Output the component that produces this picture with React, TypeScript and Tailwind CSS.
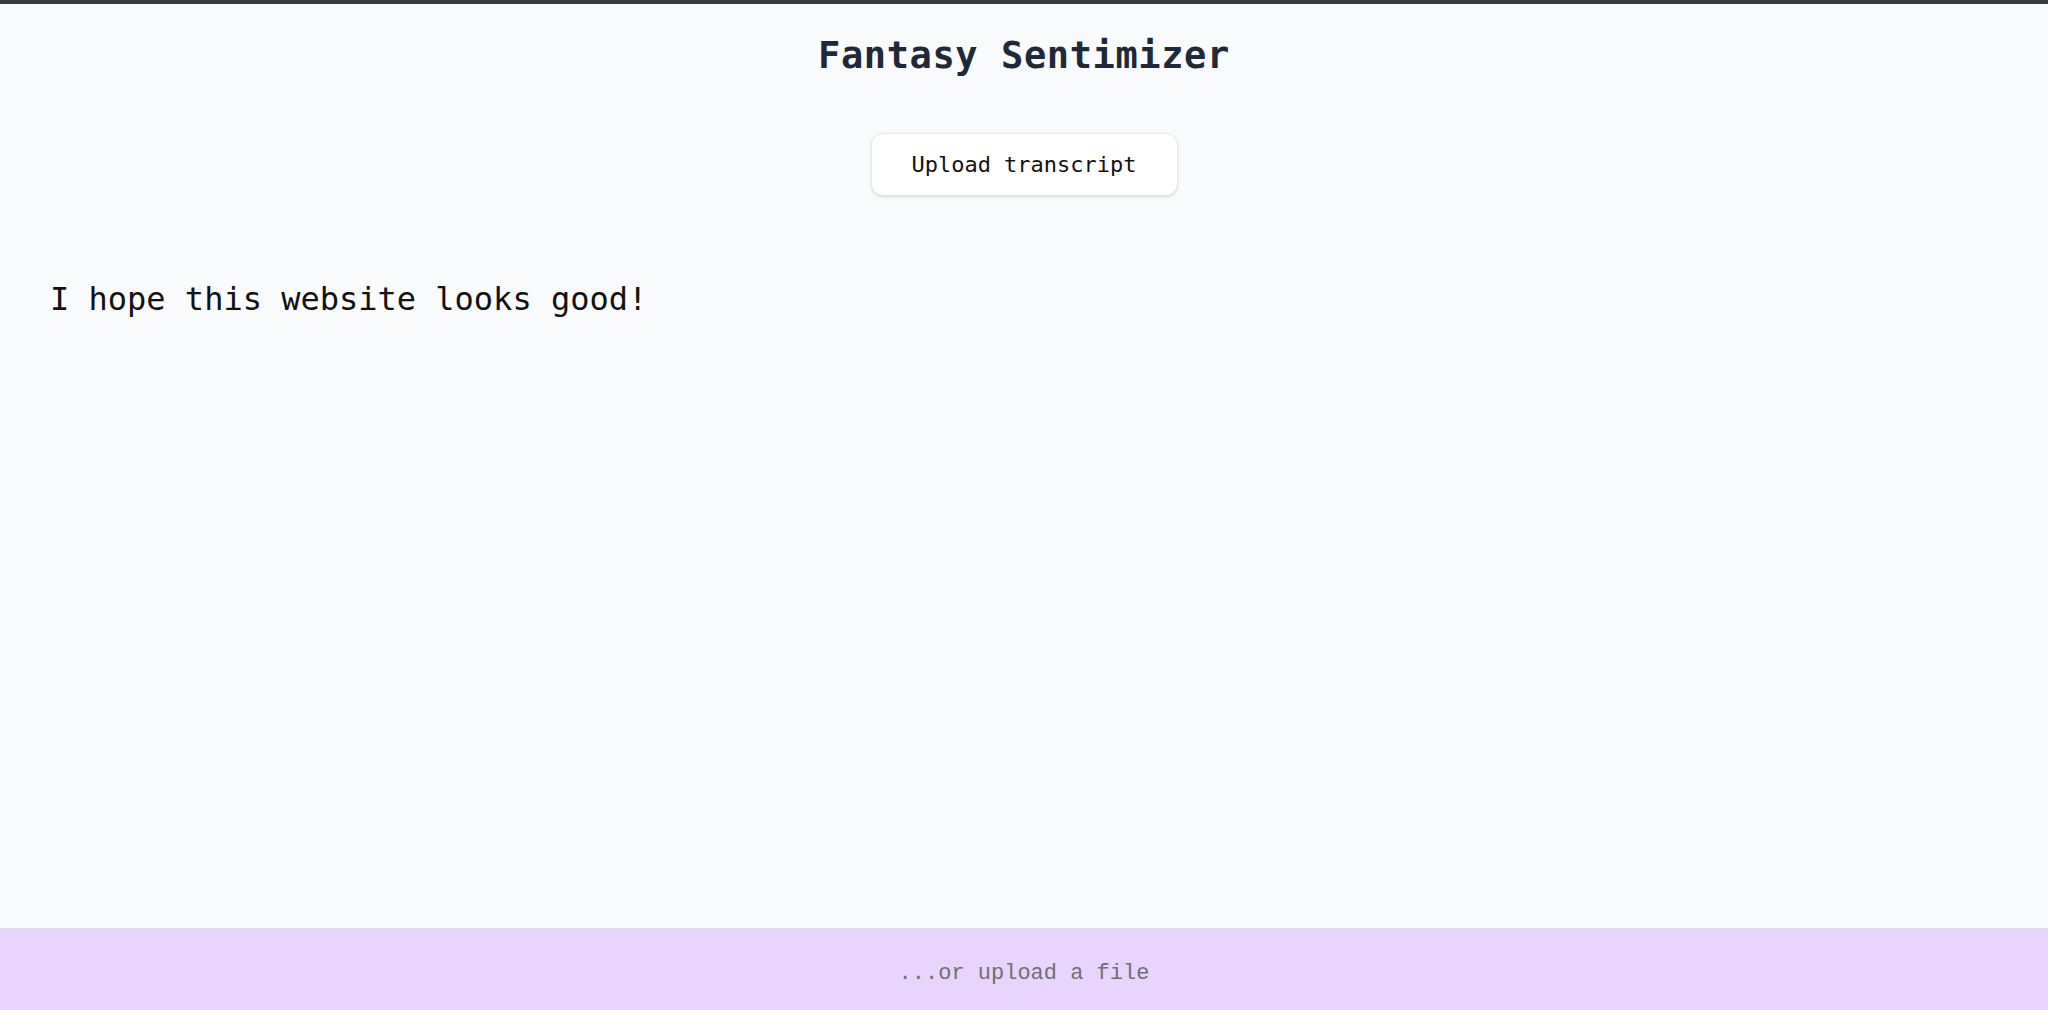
import { useState } from 'react';

const mono = { fontFamily: '"DejaVu Sans Mono", "Liberation Mono", monospace' };

export default function App() {
    const [text, setText] = useState('I hope this website looks good!');

    return (
        <div className="h-screen flex flex-col bg-[#f9fafb] border-t-4 border-[#3b3b3b]" style={mono}>
            {/* Header */}
            <header className="flex flex-col items-center pt-[30px]">
                <h1 className="text-[37px] leading-[44px] font-bold text-[#1f2937] tracking-[0.6px]">Fantasy Sentimizer</h1>
                <button className="mt-[55px] w-[307px] h-[63px] bg-white rounded-xl border border-[#e5e7eb] shadow-sm text-[22px] text-[#111]">
                    Upload transcript
                </button>
            </header>

            {/* Editor */}
            <main className="flex-1 px-[50px] pt-[79px]">
                <textarea
                    value={text}
                    onChange={(e) => setText(e.target.value)}
                    autoFocus
                    className="w-full h-full resize-none bg-transparent outline-none text-[32px] leading-[48px] text-[#111] caret-black"
                    style={mono}
                />
            </main>

            {/* Footer */}
            <footer className="h-[82px] shrink-0 flex items-center justify-center pt-2 bg-[#e8d4fe] border-t border-[#dcdce4]">
                <span className="text-[22px] text-[#707070]" style={{ fontFamily: '"Liberation Mono", monospace' }}>...or upload a file</span>
            </footer>
        </div>
    );
}
